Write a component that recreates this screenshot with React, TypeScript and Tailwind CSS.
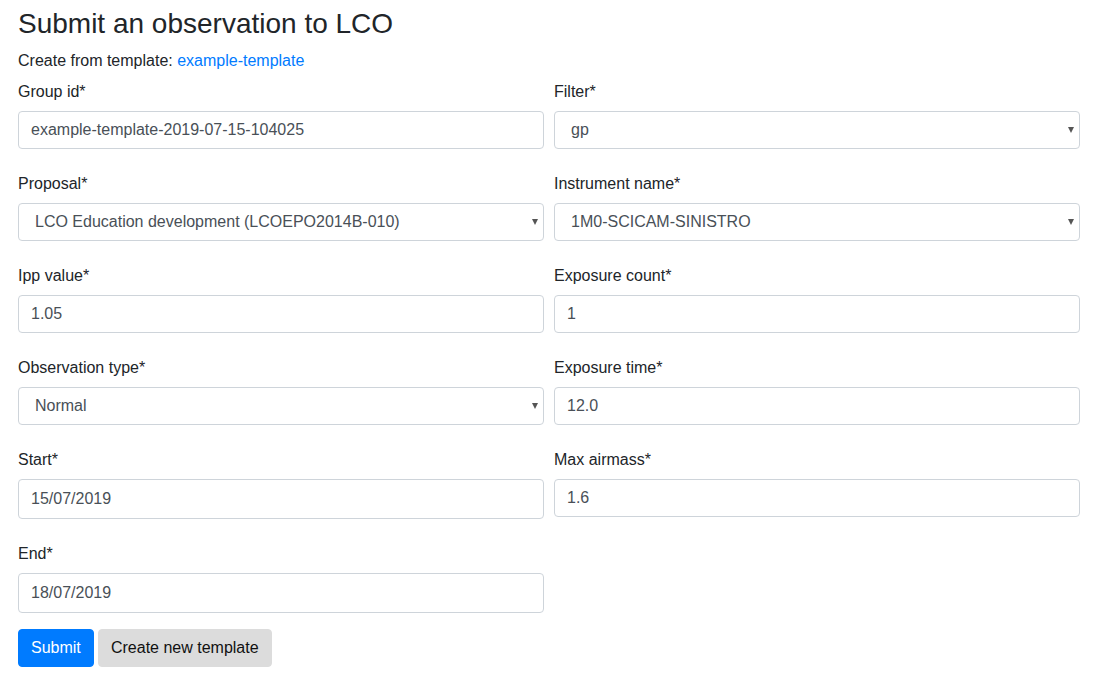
const fieldInput =
  "block w-full h-[38px] px-3 border border-[#ced4da] rounded bg-white text-[#495057] text-base outline-none";

const labelCls = "block leading-6 pt-px mb-[7px]";

function Field({ label, value, date }: { label: string; value: string; date?: boolean }) {
  return (
    <div className="mb-[22px]">
      <label className={labelCls}>{label}</label>
      <input
        readOnly
        value={value}
        className={`${fieldInput} ${date ? "h-[40px]" : ""}`}
      />
    </div>
  );
}

function SelectField({ label, value }: { label: string; value: string }) {
  return (
    <div className="mb-[22px]">
      <label className={labelCls}>{label}</label>
      <div className="relative">
        <select
          value={value}
          onChange={() => {}}
          className={`${fieldInput} appearance-none pl-4`}
        >
          <option>{value}</option>
        </select>
        <span className="absolute right-[6px] top-[16px] w-0 h-0 border-l-[3.5px] border-r-[3.5px] border-t-[6px] border-l-transparent border-r-transparent border-t-[#555]" />
      </div>
    </div>
  );
}

export default function App() {
  return (
    <div
      className="min-h-screen bg-white text-[#212529] px-[18px] pt-[7px] text-base"
      style={{ fontFamily: '"Liberation Sans", Arial, sans-serif' }}
    >
      <h3 className="text-[28px] leading-[1.2] font-normal mb-2">Submit an observation to LCO</h3>
      <p className="leading-6 mb-[6px]">
        Create from template: <a className="text-[#007bff]" href="#">example-template</a>
      </p>
      <form onSubmit={(e) => e.preventDefault()}>
        <div className="grid grid-cols-2 gap-x-[10px]">
          <Field label="Group id*" value="example-template-2019-07-15-104025" />
          <SelectField label="Filter*" value="gp" />
          <SelectField label="Proposal*" value="LCO Education development (LCOEPO2014B-010)" />
          <SelectField label="Instrument name*" value="1M0-SCICAM-SINISTRO" />
          <Field label="Ipp value*" value="1.05" />
          <Field label="Exposure count*" value="1" />
          <SelectField label="Observation type*" value="Normal" />
          <Field label="Exposure time*" value="12.0" />
          <Field label="Start*" value="15/07/2019" date />
          <Field label="Max airmass*" value="1.6" />
          <div className="mb-4">
            <label className={labelCls}>End*</label>
            <input readOnly value="18/07/2019" className={`${fieldInput} h-[40px]`} />
          </div>
        </div>
        <div className="flex gap-1">
          <button className="h-[38px] px-3 rounded bg-[#007bff] border border-[#007bff] text-white">
            Submit
          </button>
          <button type="button" className="h-[38px] w-[174px] rounded bg-[#dcdcdc] border border-[#dcdcdc] text-[#111]">
            Create new template
          </button>
        </div>
      </form>
    </div>
  );
}
